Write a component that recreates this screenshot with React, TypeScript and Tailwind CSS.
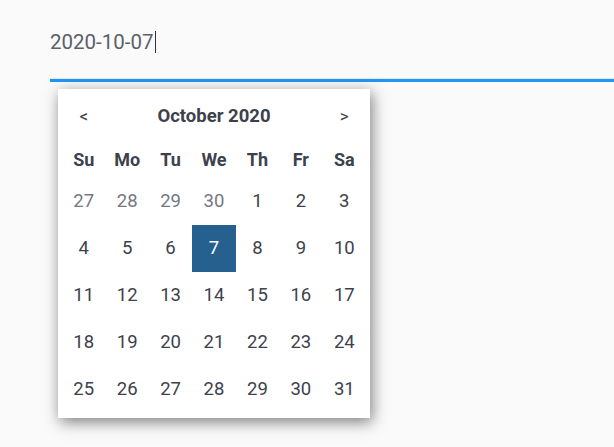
import React from "react";

const weekDays = ["Su", "Mo", "Tu", "We", "Th", "Fr", "Sa"];

type Day = { n: number; muted?: boolean };

const buildDays = (): Day[] => {
  const days: Day[] = [27, 28, 29, 30].map((n) => ({ n, muted: true }));
  for (let i = 1; i <= 31; i++) days.push({ n: i });
  return days;
};

const App = () => {
  const days = buildDays();
  const selected = 7;

  return (
    <div className="min-h-screen bg-[#fafafa] pl-[50px] font-['Roboto',sans-serif]">
      {/* Input */}
      <div className="h-[82px] pt-[28px] border-b-[3px] border-[#2196f3] shadow-[inset_0_-1px_0_#e2e7ee]">
        <div className="flex items-center text-[20.5px] leading-[28px] text-[#5a5f69]">
          <span>2020-10-07</span>
          <span className="ml-[1px] inline-block w-px h-[22px] bg-[#333]" />
        </div>
      </div>

      {/* Calendar popup */}
      <div className="ml-[8px] mt-[7px] w-[312px] bg-white px-[4px] pt-[5px] pb-[5px] shadow-[2px_4px_14px_rgba(0,0,0,0.5)] text-[#3d414b]">
        <div className="grid grid-cols-7 h-[46px] items-center">
          <button className="text-center text-[17px] text-[#3d414b]">&lt;</button>
          <div className="col-span-5 text-center text-[18.5px] font-bold">October 2020</div>
          <button className="text-center text-[17px] text-[#3d414b]">&gt;</button>
        </div>

        <div className="grid grid-cols-7 h-[38px] items-center pt-[1px] text-[18px] font-bold">
          {weekDays.map((d) => (
            <div key={d} className="text-center">
              {d}
            </div>
          ))}
        </div>

        <div className="grid grid-cols-7 auto-rows-[47px] text-[18.5px]">
          {days.map((d, i) => {
            const isSel = !d.muted && d.n === selected;
            return (
              <div
                key={i}
                className={
                  "flex items-center justify-center " +
                  (isSel
                    ? "bg-[#26608f] text-white"
                    : d.muted
                    ? "text-[#737882]"
                    : "text-[#3d414b]")
                }
              >
                {d.n}
              </div>
            );
          })}
        </div>
      </div>
    </div>
  );
};

export default App;
